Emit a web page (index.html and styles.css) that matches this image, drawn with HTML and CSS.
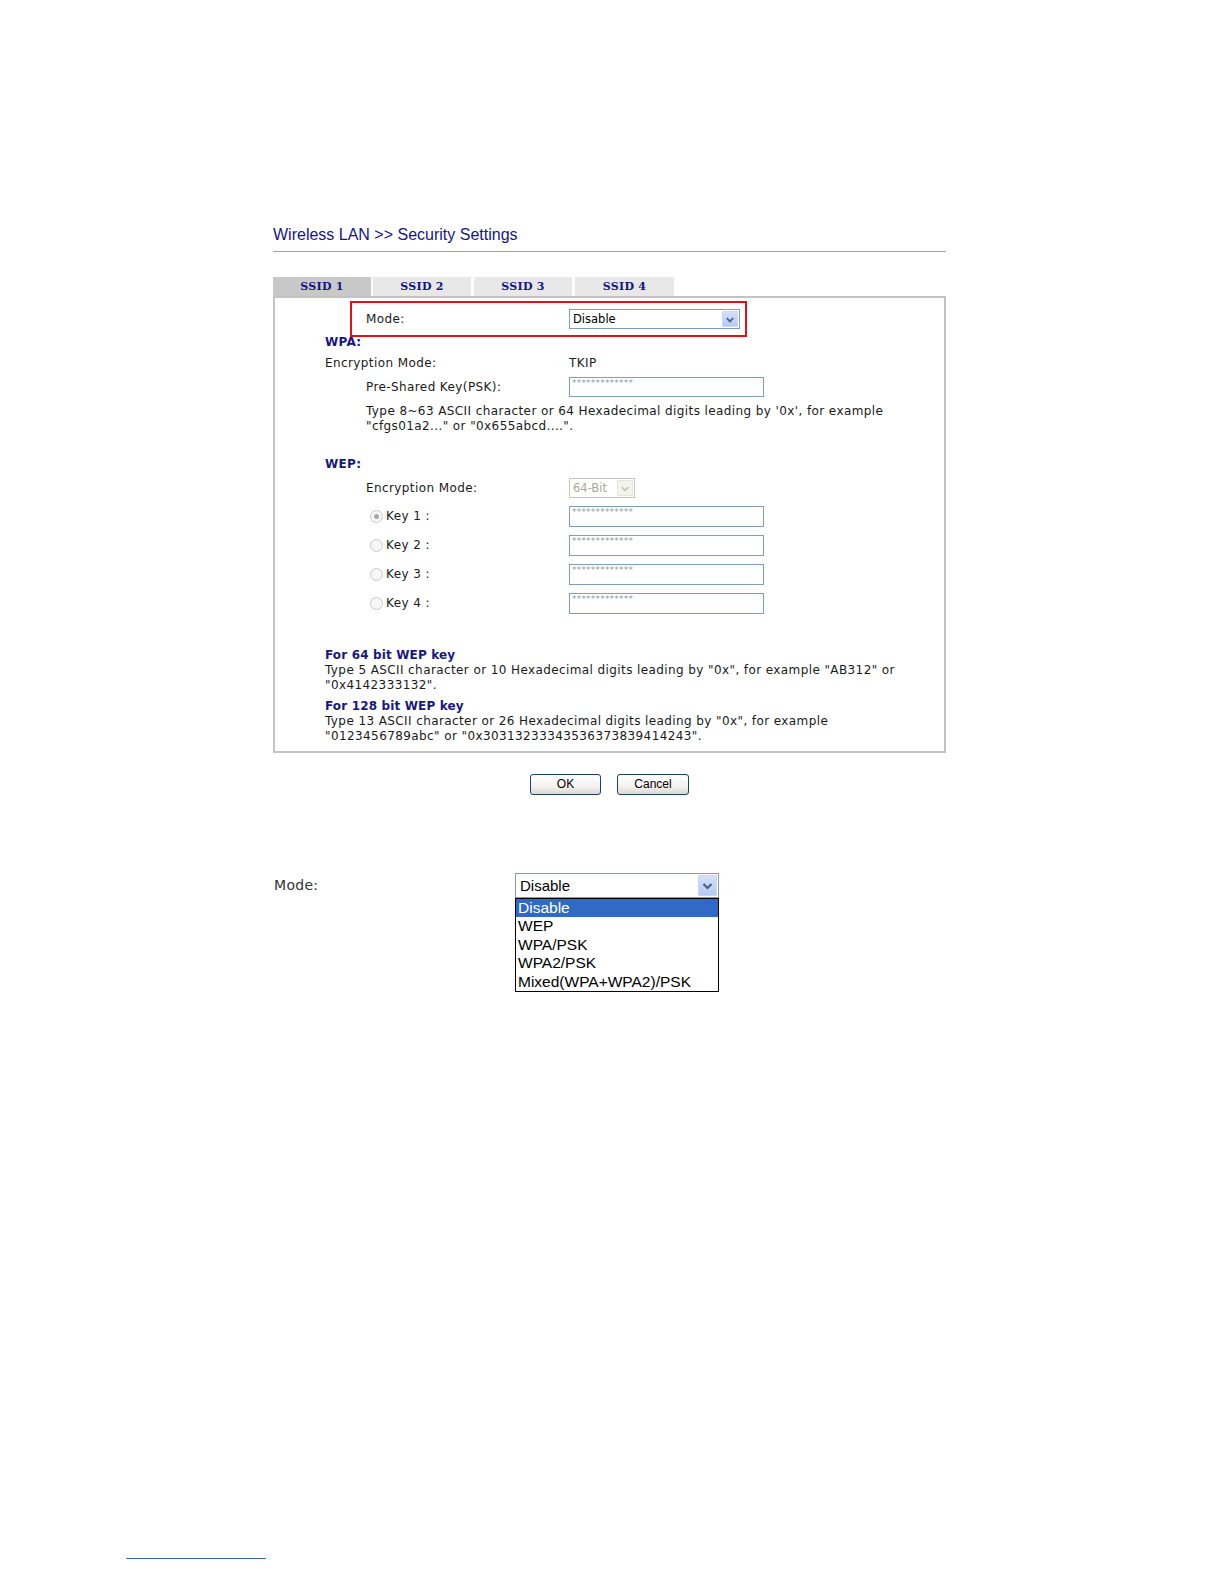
FILE: index.html
```html
<!DOCTYPE html>
<html>
<head>
<meta charset="utf-8">
<title>Wireless LAN &gt;&gt; Security Settings</title>
<link rel="stylesheet" href="styles.css">
</head>
<body>
<div class="page">
  <div class="title">Wireless LAN &gt;&gt; Security Settings</div>
  <div class="tabs">
    <div class="tab tab-active">SSID 1</div>
    <div class="tab">SSID 2</div>
    <div class="tab">SSID 3</div>
    <div class="tab tab-last">SSID 4</div>
  </div>
  <div class="panel">
    <div class="modebox">
      <span class="lbl-mode">Mode:</span>
      <div class="select sel-mode">
        <span class="sel-text">Disable</span>
        <span class="arrow"><svg width="15" height="15" viewBox="0 0 15 15"><path d="M4 6 L7.5 9.5 L11 6" fill="none" stroke="#4d6185" stroke-width="2"/></svg></span>
      </div>
    </div>
    <div class="head head-wpa">WPA:</div>
    <div class="row row-enc"><span class="lbl lbl-wide">Encryption Mode:</span><span class="val">TKIP</span></div>
    <div class="row row-psk"><span class="lbl lbl-in">Pre-Shared Key(PSK):</span><span class="input">*************</span></div>
    <div class="help help-psk">Type 8~63 ASCII character or 64 Hexadecimal digits leading by '0x', for example<br>"cfgs01a2..." or "0x655abcd....".</div>
    <div class="head head-wep">WEP:</div>
    <div class="row row-wepenc"><span class="lbl lbl-in">Encryption Mode:</span>
      <div class="select sel-dis">
        <span class="sel-text">64-Bit</span>
        <span class="arrow arrow-dis"><svg width="15" height="15" viewBox="0 0 15 15"><path d="M4 6 L7.5 9.5 L11 6" fill="none" stroke="#c9c7ba" stroke-width="2"/></svg></span>
      </div>
    </div>
    <div class="row row-key"><span class="lbl lbl-key"><span class="radio radio-on"></span>Key 1 :</span><span class="input input-key">*************</span></div>
    <div class="row row-key"><span class="lbl lbl-key"><span class="radio"></span>Key 2 :</span><span class="input input-key">*************</span></div>
    <div class="row row-key"><span class="lbl lbl-key"><span class="radio"></span>Key 3 :</span><span class="input input-key">*************</span></div>
    <div class="row row-key"><span class="lbl lbl-key"><span class="radio"></span>Key 4 :</span><span class="input input-key">*************</span></div>
    <div class="note-head note-64">For 64 bit WEP key</div>
    <div class="note">Type 5 ASCII character or 10 Hexadecimal digits leading by "0x", for example "AB312" or<br>"0x4142333132".</div>
    <div class="note-head note-128">For 128 bit WEP key</div>
    <div class="note">Type 13 ASCII character or 26 Hexadecimal digits leading by "0x", for example<br>"0123456789abc" or "0x30313233343536373839414243".</div>
  </div>
  <div class="buttons">
    <div class="btn btn-ok">OK</div>
    <div class="btn btn-cancel">Cancel</div>
  </div>
</div>

<div class="demo">
  <div class="demo-label">Mode:</div>
  <div class="demo-col">
    <div class="demo-select">
      <span class="demo-text">Disable</span>
      <span class="arrow demo-arrow"><svg width="17" height="17" viewBox="0 0 17 17"><path d="M4.5 7 L8.5 11 L12.5 7" fill="none" stroke="#4d6185" stroke-width="2.2"/></svg></span>
    </div>
    <div class="demo-list">
      <div class="opt opt-sel">Disable</div>
      <div class="opt">WEP</div>
      <div class="opt">WPA/PSK</div>
      <div class="opt">WPA2/PSK</div>
      <div class="opt">Mixed(WPA+WPA2)/PSK</div>
    </div>
  </div>
</div>

<div class="footline"></div>
</body>
</html>
```

FILE: styles.css
```css
html, body {
  margin: 0;
  padding: 0;
  background: #ffffff;
}

body {
  font-family: "DejaVu Sans", Verdana, sans-serif;
  font-size: 12px;
  letter-spacing: 0.4px;
  color: #1a1a1a;
}

.page {
  padding: 225px 0 0 273px;
  width: 673px;
}

.title {
  font-family: "Liberation Sans", Arial, sans-serif;
  font-size: 16px;
  letter-spacing: 0;
  line-height: 20px;
  color: #16167f;
  padding-bottom: 6px;
  border-bottom: 1px solid #a3a3a3;
}

.tabs {
  display: flex;
  margin-top: 25px;
  height: 19px;
}

.tab {
  width: 98px;
  height: 19px;
  margin-right: 3px;
  background: #e8e8e8;
  font-family: "DejaVu Serif", "Liberation Serif", serif;
  font-weight: bold;
  font-size: 11px;
  line-height: 20px;
  color: #14148a;
  text-align: center;
  letter-spacing: 0.3px;
}

.tab-active {
  background: #c8c8c8;
  margin-right: 2px;
}

.tab-last {
  width: 99px;
}

.panel {
  box-sizing: border-box;
  height: 457px;
  border: 2px solid #c3c3c3;
  padding: 3px 0 0 0;
}

.modebox {
  box-sizing: border-box;
  width: 397px;
  height: 36px;
  margin-left: 75px;
  border: 2px solid #e3101a;
  display: flex;
  align-items: center;
  padding-left: 14px;
}

.lbl-mode {
  width: 203px;
}

.select {
  box-sizing: border-box;
  height: 20px;
  border: 1px solid #7f9db9;
  display: flex;
  align-items: center;
  justify-content: space-between;
  background: #ffffff;
}

.sel-mode {
  width: 171px;
}

.sel-text {
  font-family: "DejaVu Sans", Verdana, sans-serif;
  font-size: 11.5px;
  letter-spacing: 0;
  padding-left: 3px;
  color: #000000;
}

.arrow {
  box-sizing: border-box;
  width: 16px;
  height: 16px;
  margin-right: 1px;
  background: linear-gradient(#d3e1fc, #b5c9f4);
  border: 1px solid #c7d6fb;
  border-radius: 1px;
  display: flex;
  align-items: center;
  justify-content: center;
}

.arrow svg {
  display: block;
}

.sel-dis {
  width: 66px;
  border-color: #c9c7ba;
}

.sel-dis .sel-text {
  color: #aca899;
}

.arrow-dis {
  background: #f4f3ee;
  border-color: #e6e4dc;
}

.head {
  font-weight: bold;
  font-size: 12px;
  color: #17177f;
  height: 14px;
  line-height: 14px;
  padding-left: 50px;
  letter-spacing: 0.3px;
}

.head-wpa {
  margin-top: -2px;
}

.head-wep {
  margin-top: 23px;
}

.row {
  display: flex;
  align-items: center;
}

.lbl {
  display: flex;
  align-items: center;
  box-sizing: border-box;
}

.lbl-wide {
  width: 294px;
  padding-left: 50px;
}

.lbl-in {
  width: 294px;
  padding-left: 91px;
}

.lbl-key {
  width: 294px;
  padding-left: 95px;
}

.row-enc {
  height: 27px;
}

.row-psk {
  height: 21px;
}

.input {
  box-sizing: border-box;
  width: 195px;
  height: 20px;
  border: 1px solid #7f9db9;
  font-size: 9px;
  line-height: 11px;
  color: #9a9a9a;
  padding-left: 2px;
  letter-spacing: 0.2px;
  align-self: center;
}

.input-key {
  height: 21px;
}

.help {
  margin-top: 7px;
  padding-left: 91px;
  line-height: 15px;
}

.row-wepenc {
  height: 22px;
  margin-top: 6px;
}

.row-key {
  height: 22px;
  margin-top: 7px;
}

.row-wepenc + .row-key {
  margin-top: 6px;
}

.radio {
  box-sizing: border-box;
  width: 13px;
  height: 13px;
  border: 1px solid #c9c9c9;
  border-radius: 50%;
  background: #f7f7f7;
  margin-right: 3px;
  display: flex;
  align-items: center;
  justify-content: center;
}

.radio-on::after {
  content: "";
  width: 5px;
  height: 5px;
  border-radius: 50%;
  background: #a8a8a8;
}

.note-head {
  font-weight: bold;
  font-size: 12px;
  letter-spacing: 0.15px;
  color: #17177f;
  line-height: 16px;
  height: 16px;
  padding-left: 50px;
}

.note-64 {
  margin-top: 33px;
}

.note-128 {
  margin-top: 5px;
}

.note {
  padding-left: 50px;
  line-height: 15px;
}

.buttons {
  display: flex;
  justify-content: center;
  gap: 16px;
  margin-top: 21px;
}

.btn {
  box-sizing: border-box;
  height: 21px;
  border: 1px solid #1c3f6e;
  border-radius: 3px;
  background: linear-gradient(#ffffff, #f3f2ee 60%, #dcd9d0);
  font-family: "Liberation Sans", Arial, sans-serif;
  font-size: 12px;
  letter-spacing: 0;
  line-height: 19px;
  text-align: center;
  color: #000000;
}

.btn-ok {
  width: 71px;
}

.btn-cancel {
  width: 72px;
}

.demo {
  display: flex;
  margin-top: 78px;
  padding-left: 274px;
}

.demo-label {
  width: 241px;
  height: 25px;
  line-height: 25px;
  font-size: 14px;
  color: #333333;
  letter-spacing: 0.3px;
}

.demo-col {
  width: 204px;
}

.demo-select {
  box-sizing: border-box;
  height: 25px;
  border: 1px solid #7f9db9;
  display: flex;
  align-items: center;
  justify-content: space-between;
}

.demo-text {
  font-family: "Liberation Sans", Arial, sans-serif;
  font-size: 15px;
  letter-spacing: 0;
  padding-left: 4px;
  color: #000000;
}

.demo-arrow {
  width: 19px;
  height: 21px;
}

.demo-list {
  box-sizing: border-box;
  border: 1px solid #000000;
  font-family: "Liberation Sans", Arial, sans-serif;
  font-size: 15.5px;
  letter-spacing: 0;
  color: #000000;
}

.opt {
  height: 18.4px;
  line-height: 18.4px;
  padding-left: 2px;
}

.opt-sel {
  background: #316ac5;
  color: #ffffff;
}

.footline {
  width: 140px;
  height: 1px;
  margin: 566px 0 0 126px;
  background: #4063a8;
}
```
